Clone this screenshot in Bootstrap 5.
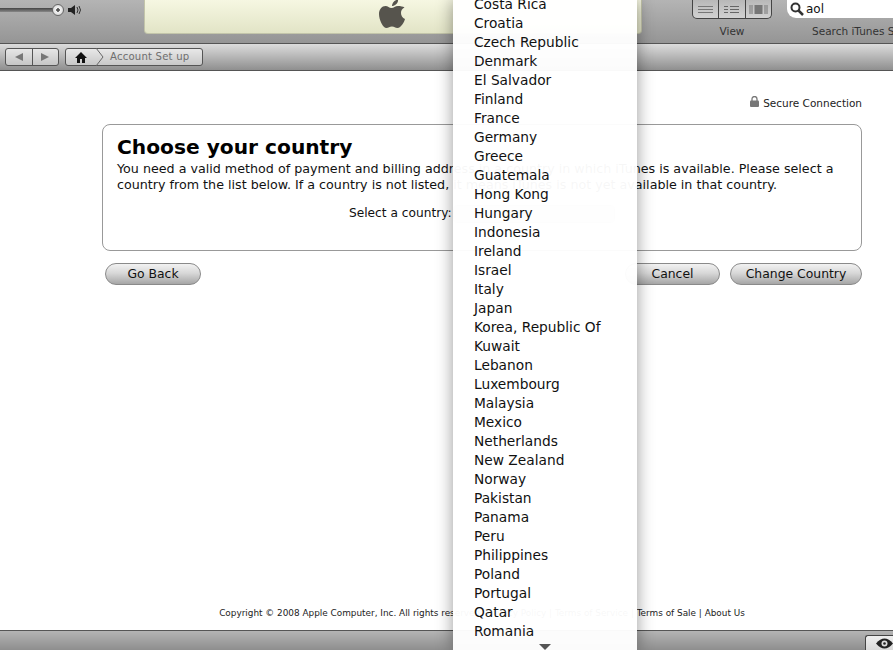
<!DOCTYPE html>
<html lang="en">
<head>
  <meta charset="UTF-8" />
  <meta name="viewport" content="width=device-width, initial-scale=1.0"/>
  <title>Account Set up</title>
  <link href="https://cdn.jsdelivr.net/npm/bootstrap@5.3.3/dist/css/bootstrap.min.css" rel="stylesheet" />
  <style>
    html, body { height: 650px; overflow: hidden; }
    body { font-family: "DejaVu Sans", sans-serif; font-size: 12px; color: #111; background: #fff; }
    .app-shell { height: 650px; }

    .top-bar { height: 44px; flex: none; background: linear-gradient(#b4b4b4, #959595); border-bottom: 1px solid #555; overflow: hidden; }
    .volume-wrap { width: 144px; flex: none; padding-top: 4px; }
    .volume-track { width: 54px; height: 4px; background: linear-gradient(#444, #888); border-radius: 0 2px 2px 0; }
    .volume-knob { width: 12px; height: 12px; border-radius: 50%; background: radial-gradient(circle, #555 0 1.5px, #f4f4f4 2px, #ccc 100%); border: 1px solid #666; margin-left: -2px; flex: none; }
    .lcd-panel { width: 498px; height: 34px; flex: none; background: linear-gradient(#f6f7e2, #e2e4c6); border: 1px solid #c3c5aa; border-top: 0; border-radius: 0 0 4px 4px; padding-right: 3px; }
    .view-wrap { width: 80px; margin-left: 50px; flex: none; }
    .view-btns { height: 19px; border: 1px solid #444; border-top: 0; border-radius: 0 0 5px 5px; background: linear-gradient(#b8b8b8, #d2d2d2); }
    .view-btns > div { flex: 1; border-right: 1px solid #444; }
    .view-btns > div:last-child { border-right: 0; }
    .tool-label { font-size: 10.5px; color: #333; line-height: 13px; margin-top: 6px; white-space: nowrap; }
    .search-wrap { width: 200px; margin-left: 15px; flex: none; }
    .search-box { height: 18px; background: #fff; border-radius: 0 0 0 9px; padding-left: 3px; gap: 2px; font-size: 12px; line-height: 17px; color: #111; }
    .search-label { margin-left: 25px; margin-top: 7px; }

    .path-bar { height: 27px; flex: none; background: linear-gradient(#dcdcdc, #8f8f8f); border-bottom: 1px solid #555; padding: 4px 0 0 5px; }
    .back-forward { width: 54px; height: 18px; border: 1px solid #555; border-radius: 3px; background: linear-gradient(#e6e6e6, #c6c6c6); }
    .back-forward > div { flex: 1; }
    .back-forward > div:first-child { border-right: 1px solid #555; }
    .crumb-box { width: 138px; height: 18px; margin-left: 6px; border: 1px solid #555; border-radius: 3px; background: linear-gradient(#e8e8e8, #c8c8c8); font-size: 10.1px; color: #6e6e6e; letter-spacing: .2px; }
    .crumb-home { width: 30px; flex: none; }
    .crumb-text { margin-left: 6px; }

    .page-body { padding: 0 31px 0 102px; position: relative; }
    .secure-line { font-size: 10.5px; height: 53px; padding-top: 25px; line-height: 14px; color: #222; }
    .country-card { height: 127px; border: 1px solid #999; border-radius: 8px; padding: 9px 14px 0; }
    .country-title { font-size: 20.2px; font-weight: 700; line-height: 27px; color: #000; margin: 0; }
    .country-text { font-size: 12.7px; line-height: 16px; margin: 0; color: #111; }
    .select-line { font-size: 12.2px; margin-top: 12px; line-height: 17px; padding-left: 232px; }
    .ghost-select { width: 162px; height: 18px; margin-left: 1px; border: 1px solid #ccc; border-radius: 4px; background: #ddd; }
    .action-row { padding: 12px 0 0 3px; }
    .aqua-btn { height: 22px; padding: 0; border: 1px solid #8a8a8a; border-radius: 11px; background: linear-gradient(#f2f2f2, #d8d8d8 45%, #a6a6a6); font-size: 12.4px; line-height: 20px; color: #111; }
    .aqua-btn:hover { border-color: #8a8a8a; }
    .btn-back { width: 96px; }
    .btn-cancel { width: 95px; margin-left: auto; }
    .btn-change { width: 132px; margin-left: 10px; }
    .legal-line { font-size: 8.9px; line-height: 12px; text-align: center; margin-top: auto; padding-bottom: 11px; color: #222; white-space: nowrap; }

    .bottom-bar { height: 20px; flex: none; background: linear-gradient(#b4b4b4, #8e8e8e); border-top: 1px solid #555; padding-top: 4px; }
    .eye-btn { width: 28px; height: 16px; margin-left: auto; background: linear-gradient(#eee, #d8d8d8); border: 1px solid #444; border-right: 0; border-bottom: 0; border-radius: 3px 0 0 0; }

    .country-menu { position: absolute; left: 453px; top: 0; width: 184px; height: 650px; margin: 0; padding: 0; border: 0; border-radius: 0; display: block; min-width: 0; background: rgba(255, 255, 255, .965); box-shadow: 0 0 16px rgba(0, 0, 0, .4); overflow: hidden; z-index: 10; }
    .country-menu .dropdown-item { padding: 0 0 0 21px; height: 19px; line-height: 19px; font-size: 13.75px; color: #111; }
    .country-menu .first-item { margin-top: -5px; }
    .menu-arrow { position: absolute; left: 86px; bottom: 0; width: 0; height: 0; border: 6px solid transparent; border-top: 6px solid #555; border-bottom: 0; }
  </style>
</head>
<body>
  <div class="app-shell d-flex flex-column">
    <div class="top-bar d-flex align-items-start">
      <div class="volume-wrap d-flex align-items-center">
        <div class="volume-track"></div>
        <div class="volume-knob"></div>
        <svg class="ms-1" width="15" height="12" viewBox="0 0 15 12"><path d="M0 4h3l4-3v10L3 8H0z" fill="#222"/><path d="M9 3q2 3 0 6M11 2q3 4 0 8" fill="none" stroke="#333"/></svg>
      </div>
      <div class="lcd-panel d-flex justify-content-center">
        <svg width="26" height="28" viewBox="0 0 26 28"><path d="M19 6c-3 0-4 2-6.500 2S9 6 6.500 6C3 6 0 9.500 0 14c0 6 4 14 7.500 14 2 0 3-1.500 5.500-1.500S16 28 18.500 28C22 28 25.500 21.500 26 19c-5-2-5.500-9.500-.5-11.500C24 6.500 21.500 6 19 6zM13 6c0-3 2.500-6 6-6.500C19.500 3 16 6 13 6z" fill="#56544d"/></svg>
      </div>
      <div class="view-wrap text-center">
        <div class="view-btns d-flex">
          <div class="d-flex align-items-center justify-content-center"><svg width="15" height="9"><path d="M0 1.500h15M0 4.500h15M0 7.500h15" stroke="#777"/></svg></div>
          <div class="d-flex align-items-center justify-content-center"><svg width="15" height="9"><path d="M0 1.500h4M6 1.500h9M0 4.500h4M6 4.500h9M0 7.500h4M6 7.500h9" stroke="#666"/></svg></div>
          <div class="d-flex align-items-center justify-content-center"><svg width="19" height="11"><path d="M5.500 1h8v9h-8z" fill="#777"/><path d="M1 1v9M3 1v9M16 1v9M18 1v9" stroke="#777"/></svg></div>
        </div>
        <div class="tool-label">View</div>
      </div>
      <div class="search-wrap">
        <div class="search-box d-flex align-items-center">
          <svg width="14" height="14" viewBox="0 0 14 14"><circle cx="5.500" cy="5.500" r="4" fill="none" stroke="#333" stroke-width="2"/><path d="M8.500 8.500l4.500 4.500" stroke="#333" stroke-width="2.500"/></svg>
          <span>aol</span>
        </div>
        <div class="tool-label search-label">Search iTunes Store</div>
      </div>
    </div>

    <div class="path-bar d-flex align-items-start">
      <div class="back-forward d-flex">
        <div class="d-flex align-items-center justify-content-center"><svg width="10" height="10"><path d="M9 1v8L1 5z" fill="#777"/></svg></div>
        <div class="d-flex align-items-center justify-content-center"><svg width="10" height="10"><path d="M1 1v8l8-4z" fill="#777"/></svg></div>
      </div>
      <div class="crumb-box d-flex align-items-center">
        <div class="crumb-home d-flex align-items-center justify-content-center"><svg width="12" height="11" viewBox="0 0 12 11"><path d="M6 0L0 6h2v5h3V7h2v4h3V6h2z" fill="#111"/></svg></div>
        <svg width="8" height="18" class="chev"><path d="M0 0l7 9-7 9" fill="none" stroke="#666"/></svg>
        <span class="crumb-text">Account Set up</span>
      </div>
    </div>

    <div class="page-body flex-grow-1 d-flex flex-column">
      <div class="secure-line d-flex justify-content-end align-items-start">
        <svg class="me-1" width="9" height="11" viewBox="0 0 9 11"><path d="M2 5V3a2.500 2.500 0 0 1 5 0v2" fill="none" stroke="#777" stroke-width="1.300"/><rect y="4.500" width="9" height="6.500" rx="1" fill="#777"/></svg>
        <span>Secure Connection</span>
      </div>
      <div class="country-card">
        <h1 class="country-title">Choose your country</h1>
        <p class="country-text">You need a valid method of payment and billing address in a country in which iTunes is available. Please select a country from the list below. If a country is not listed, it means iTunes is not yet available in that country.</p>
        <div class="select-line d-flex">
          <span>Select a country:</span>
          <div class="ghost-select"></div>
        </div>
      </div>
      <div class="action-row d-flex">
        <button type="button" class="btn aqua-btn btn-back">Go Back</button>
        <button type="button" class="btn aqua-btn btn-cancel">Cancel</button>
        <button type="button" class="btn aqua-btn btn-change">Change Country</button>
      </div>
      <div class="legal-line">Copyright © 2008 Apple Computer, Inc. All rights reserved. Privacy Policy | Terms of Service | Terms of Sale | About Us</div>
    </div>

    <div class="bottom-bar d-flex">
      <div class="eye-btn d-flex align-items-center justify-content-end">
        <svg width="17" height="11" viewBox="0 0 17 11"><path d="M0 5.500q8.500-10 17 0q-8.500 10-17 0z" fill="#222"/><circle cx="8.500" cy="5.500" r="3" fill="#ddd"/><circle cx="8.500" cy="5.500" r="1.300" fill="#222"/></svg>
      </div>
    </div>
  </div>

  <ul id="countryMenu" class="dropdown-menu country-menu"></ul>

  <script>
    const countries = ['Costa Rica', 'Croatia', 'Czech Republic', 'Denmark', 'El Salvador', 'Finland', 'France', 'Germany', 'Greece', 'Guatemala', 'Hong Kong', 'Hungary', 'Indonesia', 'Ireland', 'Israel', 'Italy', 'Japan', 'Korea, Republic Of', 'Kuwait', 'Lebanon', 'Luxembourg', 'Malaysia', 'Mexico', 'Netherlands', 'New Zealand', 'Norway', 'Pakistan', 'Panama', 'Peru', 'Philippines', 'Poland', 'Portugal', 'Qatar', 'Romania'];
    const menu = document.getElementById('countryMenu');
    countries.forEach((nome, i) => {
      const li = document.createElement('li');
      li.innerHTML = `<span class="dropdown-item${i === 0 ? ' first-item' : ''}">${nome}</span>`;
      menu.appendChild(li);
    });
    const arrow = document.createElement('li');
    arrow.className = 'menu-arrow';
    menu.appendChild(arrow);
  </script>
  <script src="https://cdn.jsdelivr.net/npm/bootstrap@5.3.3/dist/js/bootstrap.bundle.min.js"></script>
</body>
</html>
